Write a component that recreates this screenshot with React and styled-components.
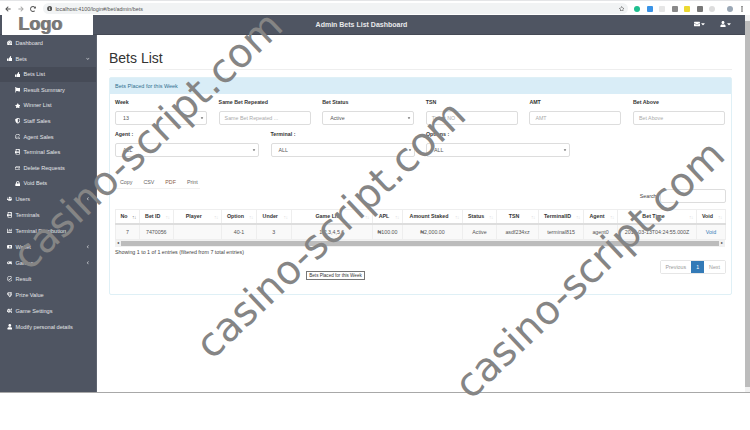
import React from "react";
import styled, { createGlobalStyle } from "styled-components";
import {
  FaArrowLeft,
  FaArrowRight,
  FaRedoAlt,
  FaInfoCircle,
  FaRegStar,
  FaEnvelope,
  FaUser,
  FaCaretDown,
  FaTachometerAlt,
  FaThumbsUp,
  FaFlag,
  FaStar,
  FaShieldAlt,
  FaRegSmile,
  FaPrint,
  FaRegHdd,
  FaLock,
  FaUsers,
  FaChartBar,
  FaMoneyBillAlt,
  FaGamepad,
  FaRegCheckCircle,
  FaRegGem,
  FaCogs,
  FaChevronDown,
  FaChevronLeft,
  FaEllipsisV,
} from "react-icons/fa";

const GlobalStyle = createGlobalStyle`
  html, body {
    margin: 0;
    padding: 0;
    height: 430px;
    overflow: hidden;
    background: #fff;
  }
  * { box-sizing: border-box; }
  body {
    font-family: "Liberation Sans", Arial, sans-serif;
    font-size: 5.5px;
    color: #444;
  }
`;

const Page = styled.div`
  position: relative;
  width: 750px;
  height: 430px;
  overflow: hidden;
`;

const Browser = styled.div`
  height: 15px;
  display: flex;
  align-items: center;
  gap: 4.5px;
  padding: 1px 0 0 4px;
  background: #fff;
  border-top: 1px solid #e4e5e7;
  color: #555;
`;

const NavIcon = styled.span`
  display: flex;
  width: 8px;
  justify-content: center;
  font-size: 6px;
  color: ${(p) => p.$color || "#555"};
`;

const Address = styled.div`
  width: 585px;
  height: 11px;
  margin-left: 1.5px;
  border-radius: 6px;
  background: #f1f3f4;
  display: flex;
  align-items: center;
  gap: 3px;
  padding: 0 4px;
  font-size: 5.4px;
  color: #555;
`;

const Url = styled.span`
  flex: 1;
`;

const Extensions = styled.div`
  display: flex;
  gap: 6.5px;
  margin-left: 1.5px;
  margin-right: 7.5px;
`;

const Extension = styled.span`
  width: 6px;
  height: 6px;
  border-radius: ${(p) => (p.$round ? "50%" : "1px")};
  background: ${(p) => p.$color};
`;

const Body = styled.div`
  display: flex;
  height: 378px;
  border-bottom: 1px solid #a8a8a8;
`;

const Viewport = styled.div`
  width: 745px;
  display: flex;
  flex-direction: column;
`;

const Scrollbar = styled.div`
  width: 5px;
  background: #f1f1f1;
  display: flex;
  flex-direction: column;
  padding: 6px 0 5px;
`;

const ScrollThumb = styled.div`
  flex: 1;
  background: #bcbcbc;
`;

const Navbar = styled.header`
  height: 19.5px;
  display: flex;
  align-items: center;
  background: #4f5562;
  border-bottom: 1px solid #454a55;
  color: #eee;
`;

const LogoBox = styled.div`
  width: 91px;
  height: 20px;
  margin: 1px 0 0 2px;
  background: #fff;
  color: #777;
  font-size: 18px;
  font-weight: 700;
  line-height: 19px;
  padding-left: 16px;
  text-shadow: 1px 0 0 #888;
`;

const NavTitle = styled.div`
  flex: 1;
  text-align: center;
  font-size: 7px;
  font-weight: 700;
  padding-right: 64px;
  color: #e8e9eb;
`;

const NavActions = styled.div`
  display: flex;
  gap: 14px;
  padding-right: 13px;
  font-size: 6px;
  color: #fff;
`;

const NavAction = styled.span`
  display: flex;
  align-items: center;
`;

const Columns = styled.div`
  flex: 1;
  display: flex;
  min-height: 0;
`;

const Sidebar = styled.nav`
  width: 98px;
  background: #4f5562;
  border-right: 1px solid #5e6470;
`;

const SideItem = styled.div`
  height: ${(p) => (p.$sub ? "15.6px" : "16px")};
  display: flex;
  align-items: center;
  gap: 3px;
  padding-left: ${(p) => (p.$sub ? "14.5px" : "6.5px")};
  padding-right: 6px;
  font-size: 5.6px;
  color: #e3e5e8;
  background: ${(p) => (p.$active ? "#464b57" : "transparent")};
`;

const SideIcon = styled.span`
  display: flex;
  width: 6px;
  justify-content: center;
  font-size: 5.6px;
  color: #fff;
`;

const SideLabel = styled.span`
  flex: 1;
  white-space: nowrap;
`;

const SideArrow = styled.span`
  display: flex;
  font-size: 3.6px;
  color: #d5d7db;
`;

const Main = styled.main`
  flex: 1;
  padding: 14px 13px 0 12px;
  background: #fff;
`;

const Heading = styled.h1`
  margin: 0;
  height: 21px;
  font-size: 14px;
  font-weight: 400;
  line-height: 19px;
  color: #333;
  border-bottom: 1px solid #eee;
`;

const Card = styled.section`
  margin-top: 7px;
  height: 218px;
  border: 1px solid #dff0f6;
  border-radius: 2px;
`;

const CardHead = styled.div`
  height: 16px;
  display: flex;
  align-items: center;
  padding-left: 5px;
  background: #d9edf7;
  color: #31708f;
  font-size: 5.5px;
`;

const CardBody = styled.div`
  padding: 6px 5px 0;
`;

const FilterGrid = styled.div`
  display: grid;
  grid-template-columns: repeat(${(p) => p.$cols}, ${(p) => p.$width}px);
  column-gap: ${(p) => p.$gap}px;
  margin-bottom: 6.5px;
`;

const Field = styled.div`
  display: flex;
  flex-direction: column;
  gap: 5.5px;
`;

const Label = styled.label`
  height: 5.5px;
  line-height: 5.5px;
  font-size: 5.3px;
  font-weight: 700;
  color: #333;
`;

const Control = styled.div`
  height: 14.5px;
  display: flex;
  align-items: center;
  justify-content: space-between;
  padding: 0 2px 0 ${(p) => (p.$select ? "7px" : "5px")};
  border: 1px solid #ddd;
  border-radius: 2px;
  background: #fff;
  font-size: 5.3px;
  color: ${(p) => (p.$select ? "#555" : "#aaa")};
`;

const Caret = styled.span`
  display: flex;
  font-size: 4px;
  color: #333;
`;

const Exports = styled.div`
  width: 85px;
  display: flex;
  gap: 11px;
  margin-top: 22px;
  padding: 0 0 3px 5px;
  border-bottom: 1px solid #f1f1f1;
  font-size: 5.3px;
  color: #666;
`;

const ExportLink = styled.span`
  color: ${(p) => p.$color || "#666"};
`;

const SearchRow = styled.div`
  display: flex;
  justify-content: flex-end;
  align-items: center;
  gap: 2px;
  height: 14px;
  margin-bottom: 6px;
  font-size: 5.3px;
`;

const SearchBox = styled.div`
  width: 66px;
  height: 14px;
  border: 1px solid #ddd;
  border-radius: 2px;
`;

const Table = styled.table`
  width: 610px;
  table-layout: fixed;
  border-collapse: collapse;
  font-size: 5.3px;
`;

const Th = styled.th`
  position: relative;
  height: 14px;
  padding: 0 11px 0 4px;
  text-align: center;
  font-weight: 700;
  color: #333;
  border: 1px solid #eee;
  border-bottom: 2px solid #ddd;
  white-space: nowrap;
`;

const SortMark = styled.span`
  position: absolute;
  right: 3px;
  top: 3.5px;
  font-size: 5px;
  font-weight: 400;
  letter-spacing: -0.5px;
  color: ${(p) => (p.$on ? "#888" : "#ddd")};
`;

const Td = styled.td`
  height: 16px;
  padding: 0;
  text-align: center;
  white-space: nowrap;
  color: #555;
  background: #f9f9f9;
  border: 1px solid #eee;
`;

const VoidLink = styled.span`
  color: #337ab7;
`;

const TableScroll = styled.div`
  width: 610px;
  height: 7px;
  display: flex;
  align-items: stretch;
  background: #f1f1f1;
`;

const ScrollEnd = styled.span`
  width: 6px;
  font-size: 3.5px;
  line-height: 7px;
  text-align: center;
  color: #333;
`;

const TableThumb = styled.div`
  flex: 1;
  margin: 1px 0;
  background: #bcbcbc;
`;

const Footer = styled.div`
  position: relative;
  display: flex;
  justify-content: space-between;
  align-items: flex-start;
  padding-top: 2px;
  font-size: 5.3px;
  color: #444;
`;

const Pager = styled.div`
  display: flex;
  height: 14px;
  margin-top: 11px;
  border: 1px solid #e6e6e6;
  border-radius: 2px;
  color: #888;
`;

const PageCell = styled.span`
  display: flex;
  align-items: center;
  padding: 0 ${(p) => p.$pad}px;
  color: ${(p) => (p.$active ? "#fff" : "#999")};
  background: ${(p) => (p.$active ? "#337ab7" : "#fff")};
`;

const Tip = styled.div`
  position: absolute;
  left: 191px;
  top: 24px;
  width: 59px;
  height: 9px;
  display: flex;
  align-items: center;
  justify-content: center;
  font-size: 4.6px;
  color: #333;
  background: #fff;
  border: 1px solid #777;
`;

const Watermark = styled.div`
  position: absolute;
  left: ${(p) => p.$x}px;
  top: ${(p) => p.$y}px;
  font-family: "DejaVu Sans", Verdana, sans-serif;
  font-size: 40px;
  line-height: 1;
  white-space: nowrap;
  color: #858585;
  transform: rotate(-43.5deg);
  transform-origin: 0 100%;
  pointer-events: none;
`;

const menu = [
  { icon: <FaTachometerAlt />, label: "Dashboard" },
  { icon: <FaThumbsUp />, label: "Bets", arrow: "down" },
  { icon: <FaThumbsUp />, label: "Bets List", sub: true, active: true },
  { icon: <FaFlag />, label: "Result Summary", sub: true },
  { icon: <FaStar />, label: "Winner List", sub: true },
  { icon: <FaShieldAlt />, label: "Staff Sales", sub: true },
  { icon: <FaRegSmile />, label: "Agent Sales", sub: true },
  { icon: <FaPrint />, label: "Terminal Sales", sub: true },
  { icon: <FaRegHdd />, label: "Delete Requests", sub: true },
  { icon: <FaLock />, label: "Void Bets", sub: true },
  { icon: <FaUsers />, label: "Users", arrow: "left" },
  { icon: <FaPrint />, label: "Terminals" },
  { icon: <FaChartBar />, label: "Terminal Distribution" },
  { icon: <FaMoneyBillAlt />, label: "Wallet", arrow: "left" },
  { icon: <FaGamepad />, label: "Games", arrow: "left" },
  { icon: <FaRegCheckCircle />, label: "Result" },
  { icon: <FaRegGem />, label: "Prize Value" },
  { icon: <FaCogs />, label: "Game Settings" },
  { icon: <FaUser />, label: "Modify personal details" },
];

const topFilters = [
  { label: "Week", value: "13", select: true },
  { label: "Same Bet Repeated", value: "Same Bet Repeated ..." },
  { label: "Bet Status", value: "Active", select: true },
  { label: "TSN", value: "Ticket NO" },
  { label: "AMT", value: "AMT" },
  { label: "Bet Above", value: "Bet Above" },
];

const lowerFilters = [
  { label: "Agent :", value: "ALL" },
  { label: "Terminal :", value: "ALL" },
  { label: "Options :", value: "ALL" },
];

const columns = [
  { title: "No", width: 24, on: true },
  { title: "Bet ID", width: 33.5 },
  { title: "Player", width: 48.5 },
  { title: "Option", width: 35 },
  { title: "Under", width: 34.5 },
  { title: "Game List", width: 81.5 },
  { title: "APL", width: 30 },
  { title: "Amount Staked", width: 60 },
  { title: "Status", width: 34 },
  { title: "TSN", width: 42 },
  { title: "TerminalID", width: 45 },
  { title: "Agent", width: 34 },
  { title: "Bet Time", width: 79 },
  { title: "Void", width: 29 },
];

const row = [
  "7",
  "7470056",
  "",
  "40-1",
  "3",
  "1,2,3,4,5,6",
  "₦100.00",
  "₦2,000.00",
  "Active",
  "asdf234xz",
  "terminal815",
  "agent0",
  "2018-03-13T04:24:55.000Z",
];

const Filter = ({ item, select }) => (
  <Field>
    <Label>{item.label}</Label>
    <Control $select={select}>
      {item.value}
      {select && (
        <Caret>
          <FaCaretDown />
        </Caret>
      )}
    </Control>
  </Field>
);

export default function App() {
  return (
    <Page>
      <GlobalStyle />
      <Browser>
        <NavIcon><FaArrowLeft /></NavIcon>
        <NavIcon $color="#aaa"><FaArrowRight /></NavIcon>
        <NavIcon><FaRedoAlt /></NavIcon>
        <Address>
          <FaInfoCircle />
          <Url>localhost:4100/login#/bet/admin/bets</Url>
          <FaRegStar />
        </Address>
        <Extensions>
          <Extension $round $color="#1fbf8f" />
          <Extension $color="#3a93e6" />
          <Extension $color="#e6e6e6" />
          <Extension $color="#8a8a8a" />
          <Extension $color="#ecd932" />
          <Extension $color="#777" />
          <Extension $round $color="#ddd" />
        </Extensions>
        <Extension $round $color="#9aa7b5" />
        <NavIcon><FaEllipsisV /></NavIcon>
      </Browser>
      <Body>
        <Viewport>
          <Navbar>
            <LogoBox>Logo</LogoBox>
            <NavTitle>Admin Bets List Dashboard</NavTitle>
            <NavActions>
              <NavAction><FaEnvelope /><FaCaretDown /></NavAction>
              <NavAction><FaUser /><FaCaretDown /></NavAction>
            </NavActions>
          </Navbar>
          <Columns>
            <Sidebar>
              {menu.map((item) => (
                <SideItem key={item.label} $sub={item.sub} $active={item.active}>
                  <SideIcon>{item.icon}</SideIcon>
                  <SideLabel>{item.label}</SideLabel>
                  {item.arrow && (
                    <SideArrow>
                      {item.arrow === "down" ? <FaChevronDown /> : <FaChevronLeft />}
                    </SideArrow>
                  )}
                </SideItem>
              ))}
            </Sidebar>
            <Main>
              <Heading>Bets List</Heading>
              <Card>
                <CardHead>Bets Placed for this Week</CardHead>
                <CardBody>
                  <FilterGrid $cols={6} $width={92} $gap={11.6}>
                    {topFilters.map((item) => (
                      <Filter key={item.label} item={item} select={item.select} />
                    ))}
                  </FilterGrid>
                  <FilterGrid $cols={3} $width={144} $gap={11.5}>
                    {lowerFilters.map((item) => (
                      <Filter key={item.label} item={item} select />
                    ))}
                  </FilterGrid>
                  <Exports>
                    <ExportLink>Copy</ExportLink>
                    <ExportLink>CSV</ExportLink>
                    <ExportLink $color="#8a5a44">PDF</ExportLink>
                    <ExportLink>Print</ExportLink>
                  </Exports>
                  <SearchRow>
                    Search:
                    <SearchBox />
                  </SearchRow>
                  <Table>
                    <colgroup>
                      {columns.map((c) => (
                        <col key={c.title} width={c.width} />
                      ))}
                    </colgroup>
                    <thead>
                      <tr>
                        {columns.map((c) => (
                          <Th key={c.title}>
                            {c.title}
                            <SortMark $on={c.on}>↑↓</SortMark>
                          </Th>
                        ))}
                      </tr>
                    </thead>
                    <tbody>
                      <tr>
                        {row.map((value, i) => (
                          <Td key={i}>{value}</Td>
                        ))}
                        <Td><VoidLink>Void</VoidLink></Td>
                      </tr>
                    </tbody>
                  </Table>
                  <TableScroll>
                    <ScrollEnd>◂</ScrollEnd>
                    <TableThumb />
                    <ScrollEnd>▸</ScrollEnd>
                  </TableScroll>
                  <Footer>
                    Showing 1 to 1 of 1 entries (filtered from 7 total entries)
                    <Pager>
                      <PageCell $pad={5}>Previous</PageCell>
                      <PageCell $pad={5} $active>1</PageCell>
                      <PageCell $pad={5}>Next</PageCell>
                    </Pager>
                    <Tip>Bets Placed for this Week</Tip>
                  </Footer>
                </CardBody>
              </Card>
            </Main>
          </Columns>
        </Viewport>
        <Scrollbar>
          <ScrollThumb />
        </Scrollbar>
      </Body>
      <Watermark $x={33} $y={236}>casino-script.com</Watermark>
      <Watermark $x={216} $y={325}>casino-script.com</Watermark>
      <Watermark $x={475} $y={365}>casino-script.com</Watermark>
    </Page>
  );
}
